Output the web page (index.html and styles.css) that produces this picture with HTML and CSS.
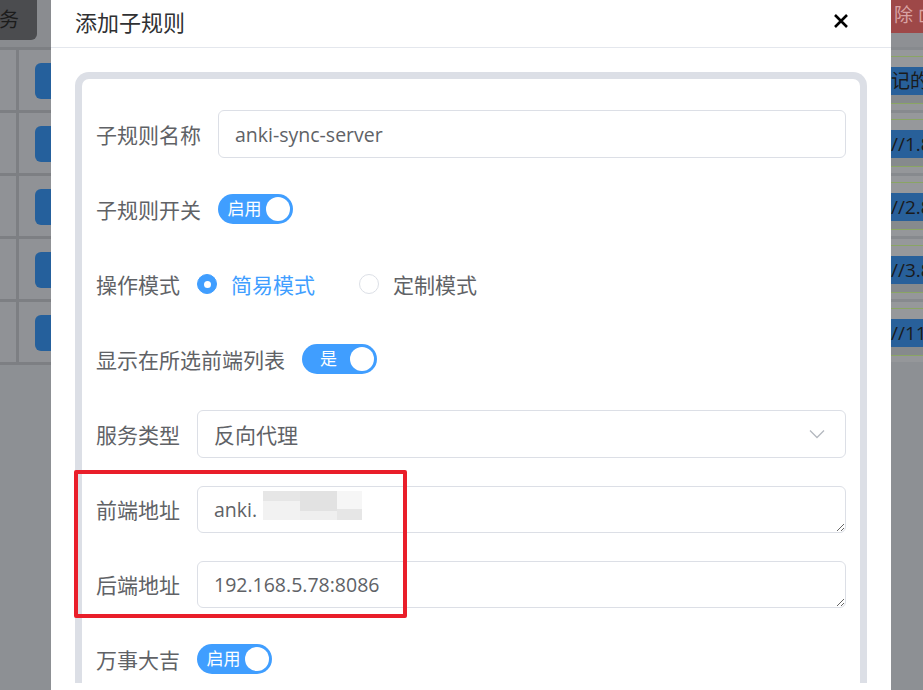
FILE: index.html
```html
<!DOCTYPE html>
<html lang="zh-CN">

<head>
    <meta charset="UTF-8">
    <meta name="viewport" content="width=device-width, initial-scale=1.0">
    <title>添加子规则</title>
    <link rel="stylesheet" href="styles.css">
</head>

<body>
    <div class="page">
        <!-- 左侧被遮罩的表格 -->
        <div class="side-left">
            <div class="side-top">
                <div class="dark-btn">服务</div>
            </div>
            <div class="table-row"><div class="cell-first"></div><div class="cell-btn"></div></div>
            <div class="table-row"><div class="cell-first"></div><div class="cell-btn"></div></div>
            <div class="table-row"><div class="cell-first"></div><div class="cell-btn"></div></div>
            <div class="table-row"><div class="cell-first"></div><div class="cell-btn"></div></div>
            <div class="table-row"><div class="cell-first"></div><div class="cell-btn"></div></div>
        </div>

        <!-- 弹窗 -->
        <div class="dialog">
            <div class="dialog-header">
                <span class="dialog-title">添加子规则</span>
                <span class="dialog-close">
                    <svg width="16" height="16" viewBox="0 0 16 16">
                        <path d="M2 2 L14 14 M14 2 L2 14" stroke="#000" stroke-width="2.6" fill="none" />
                    </svg>
                </span>
            </div>
            <div class="dialog-body">
                <div class="card">
                    <div class="form-item">
                        <label class="form-label">子规则名称</label>
                        <input class="form-input" type="text" value="anki-sync-server">
                    </div>

                    <div class="form-item">
                        <label class="form-label">子规则开关</label>
                        <span class="switch"><span class="switch-text">启用</span><span class="switch-knob"></span></span>
                    </div>

                    <div class="form-item">
                        <label class="form-label">操作模式</label>
                        <span class="radio checked"><span class="radio-dot"></span><span class="radio-text">简易模式</span></span>
                        <span class="radio"><span class="radio-dot"></span><span class="radio-text">定制模式</span></span>
                    </div>

                    <div class="form-item">
                        <label class="form-label">显示在所选前端列表</label>
                        <span class="switch"><span class="switch-text">是</span><span class="switch-knob"></span></span>
                    </div>

                    <div class="form-item">
                        <label class="form-label">服务类型</label>
                        <div class="form-select">
                            <span>反向代理</span>
                            <svg width="16" height="10" viewBox="0 0 16 10">
                                <path d="M1 1.5 L8 8.5 L15 1.5" stroke="#b4b8bf" stroke-width="1.3" fill="none" />
                            </svg>
                        </div>
                    </div>

                    <div class="form-item">
                        <label class="form-label">前端地址</label>
                        <div class="textarea-wrap">
                            <textarea class="form-textarea" rows="1">anki.</textarea>
                            <!-- 打码区域 -->
                            <div class="mosaic">
                                <div class="mosaic-col"><span class="m1"></span><span class="m2"></span></div>
                                <div class="mosaic-col"><span class="m3"></span><span class="m4"></span></div>
                                <div class="mosaic-col narrow"><span class="m5"></span><span class="m6"></span></div>
                            </div>
                        </div>
                    </div>

                    <div class="form-item">
                        <label class="form-label">后端地址</label>
                        <div class="textarea-wrap">
                            <textarea class="form-textarea" rows="1">192.168.5.78:8086</textarea>
                        </div>
                    </div>

                    <div class="form-item">
                        <label class="form-label">万事大吉</label>
                        <span class="switch"><span class="switch-text">启用</span><span class="switch-knob"></span></span>
                    </div>
                </div>
                <!-- 红色标注框 -->
                <div class="mark-box"></div>
            </div>
        </div>

        <!-- 右侧被遮罩的表格 -->
        <div class="side-right">
            <div class="red-btn">除 ⊡</div>
            <div class="r-row"><span class="r-band">记的地</span></div>
            <div class="r-row"><span class="r-band">//1.8</span></div>
            <div class="r-row"><span class="r-band">//2.8</span></div>
            <div class="r-row"><span class="r-band">//3.8</span></div>
            <div class="r-row"><span class="r-band">//11</span></div>
        </div>
    </div>
</body>

</html>
```

FILE: styles.css
```css
/* 全局样式设置 */
body {
    margin: 0;
    padding: 0;
    font-family: 'Open Sans', 'Noto Sans CJK SC', sans-serif;
    background-color: #8d9094;
    overflow: hidden;
}

.page {
    display: flex;
    height: 690px;
    overflow: hidden;
}

/* 左侧遮罩区域 */
.side-left {
    width: 51px;
    flex: none;
    overflow: hidden;
}

.side-top {
    height: 50px;
    background-color: #8a8c90;
    border-bottom: 3px solid #7d7f83;
    box-sizing: border-box;
}

.dark-btn {
    width: 37px;
    height: 40px;
    background-color: #4b4c4f;
    border-radius: 0 0 6px 0;
    color: #1c1c1c;
    font-size: 20px;
    line-height: 40px;
    display: flex;
    justify-content: flex-end;
    padding-right: 18px;
    box-sizing: border-box;
    overflow: hidden;
    white-space: nowrap;
}

.table-row {
    height: 63px;
    display: flex;
    border-bottom: 3px solid #7d7f83;
    box-sizing: border-box;
    background-color: #909296;
}

.cell-first {
    width: 16px;
    flex: none;
    border-right: 3px solid #7d7f83;
}

.cell-btn {
    flex: none;
    margin: 13px 0 0 16px;
    width: 30px;
    height: 36px;
    background-color: #25609c;
    border-radius: 6px 0 0 6px;
}

/* 弹窗 */
.dialog {
    width: 840px;
    flex: none;
    background-color: #ffffff;
    position: relative;
}

.dialog-header {
    height: 48px;
    box-sizing: border-box;
    border-bottom: 1px solid #e4e7ed;
    padding: 0 42px 0 24px;
    display: flex;
    align-items: center;
    justify-content: space-between;
}

.dialog-title {
    font-size: 22px;
    color: #303133;
    margin-top: -5px;
}

.dialog-close {
    display: flex;
    margin-top: -5px;
}

.dialog-body {
    padding: 24px 24px 0 24px;
}

/* 表单卡片 */
.card {
    border: 7px solid #dcdfe6;
    border-bottom: none;
    border-radius: 14px 14px 0 0;
    padding: 31px 14px 0 14px;
}

.form-item {
    display: flex;
    align-items: center;
    height: 48px;
    margin-bottom: 27px;
}

.form-label {
    font-size: 21px;
    color: #606266;
    padding-right: 17px;
    flex: none;
    white-space: nowrap;
}

.form-input,
.form-select,
.form-textarea {
    flex: 1;
    height: 48px;
    border: 1px solid #dcdfe6;
    border-radius: 6px;
    box-sizing: border-box;
    padding: 0 16px;
    font-family: 'Open Sans', 'Noto Sans CJK SC', sans-serif;
    font-size: 19.5px;
    color: #606266;
    outline: none;
}

.form-select {
    display: flex;
    align-items: center;
    justify-content: space-between;
    font-size: 21px;
    padding-right: 20px;
}

.textarea-wrap {
    flex: 1;
    display: flex;
    position: relative;
}

.form-textarea {
    height: 47px;
    padding: 10px 16px;
    line-height: 25px;
    resize: vertical;
}

/* 打码 */
.mosaic {
    position: absolute;
    left: 66px;
    top: 5px;
    display: flex;
}

.mosaic-col {
    width: 37px;
    display: flex;
    flex-direction: column;
}

.mosaic-col.narrow {
    width: 25px;
}

.mosaic-col span {
    display: block;
}

.m1 { height: 10px; background-color: #e6e6e6; }
.m2 { height: 19px; background-color: #f2f2f2; }
.m3 { height: 20px; background-color: #e2e2e2; }
.m4 { height: 9px; background-color: #efefef; }
.m5 { height: 18px; background-color: #f6f6f6; }
.m6 { height: 11px; background-color: #e6e6e6; }

/* 开关 */
.switch {
    display: inline-flex;
    align-items: center;
    width: 75px;
    height: 30px;
    border-radius: 15px;
    background-color: #409eff;
    padding: 0 3px 0 5px;
    box-sizing: border-box;
}

.switch-text {
    flex: 1;
    text-align: center;
    color: #ffffff;
    font-size: 17px;
    line-height: 30px;
}

.switch-knob {
    width: 24px;
    height: 24px;
    border-radius: 50%;
    background-color: #ffffff;
}

/* 单选 */
.radio {
    display: inline-flex;
    align-items: center;
    margin-right: 44px;
}

.radio-dot {
    width: 20px;
    height: 20px;
    border: 1px solid #dcdfe6;
    border-radius: 50%;
    box-sizing: border-box;
    background-color: #ffffff;
    display: flex;
    align-items: center;
    justify-content: center;
}

.radio-text {
    margin-left: 14px;
    font-size: 21px;
    color: #606266;
}

.radio.checked .radio-dot {
    background-color: #409eff;
    border-color: #409eff;
}

.radio.checked .radio-dot::after {
    content: "";
    width: 7px;
    height: 7px;
    border-radius: 50%;
    background-color: #ffffff;
}

.radio.checked .radio-text {
    color: #409eff;
}

/* 红色标注框 */
.mark-box {
    position: absolute;
    left: 23px;
    top: 470px;
    width: 333px;
    height: 148px;
    border: 4px solid #e91e2a;
    border-radius: 2px;
    box-sizing: border-box;
}

/* 右侧遮罩区域 */
.side-right {
    flex: 1;
    overflow: hidden;
    white-space: nowrap;
}

.red-btn {
    height: 33px;
    background-color: #9e4848;
    color: #d9a3a3;
    font-size: 19px;
    line-height: 30px;
    padding-left: 3px;
    border-bottom: 14px solid #8e9094;
    overflow: hidden;
}

.r-row {
    height: 63px;
    box-sizing: border-box;
    padding-top: 20px;
    background: linear-gradient(#878a8e 0 3px, #96989b 3px 9px, #8aa564 9px 10px, #96989b 10px 20px, transparent 20px 48px, #868a8d 48px 56px, #8aa564 56px 57px, #95979a 57px);
}

.r-band {
    display: block;
    height: 28px;
    background-color: #28609a;
    color: #1a1a1a;
    font-size: 19px;
    line-height: 28px;
}
```
